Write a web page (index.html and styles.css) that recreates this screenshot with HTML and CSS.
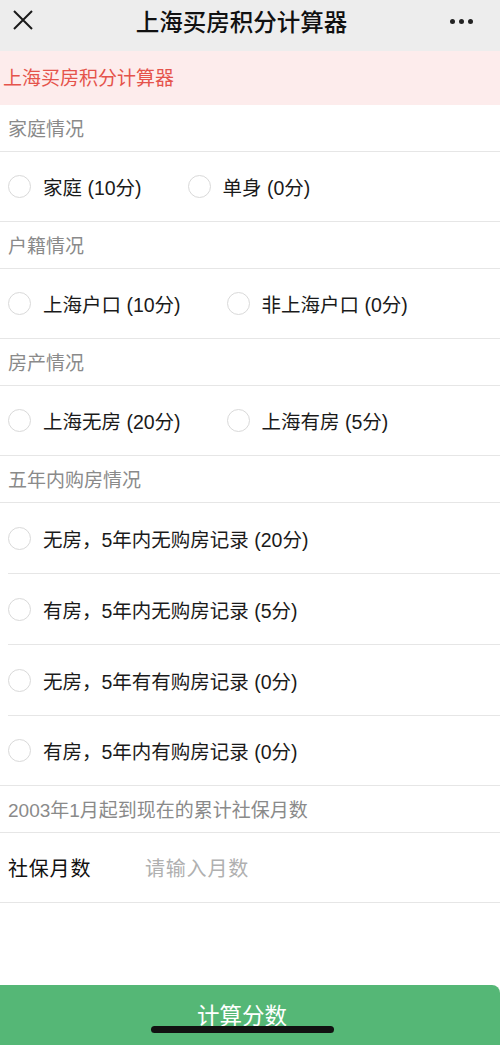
FILE: index.html
```html
<!DOCTYPE html>
<html lang="zh-CN">
<head>
    <meta charset="UTF-8">
    <meta name="viewport" content="width=device-width, initial-scale=1.0">
    <title>上海买房积分计算器</title>
    <link rel="stylesheet" href="styles.css">
</head>
<body>
    <div class="page">
        <header class="nav">
            <span class="nav-close">
                <svg width="20" height="20" viewBox="0 0 20 20">
                    <path d="M1 1 L19 19 M19 1 L1 19" stroke="#1a1a1a" stroke-width="2" fill="none"/>
                </svg>
            </span>
            <h1>上海买房积分计算器</h1>
            <span class="nav-more"><i></i><i></i><i></i></span>
        </header>

        <div class="banner">上海买房积分计算器</div>

        <div class="group-title">家庭情况</div>
        <div class="row">
            <label class="radio"><span class="circle"></span>家庭 (10分)</label>
            <label class="radio"><span class="circle"></span>单身 (0分)</label>
        </div>

        <div class="group-title">户籍情况</div>
        <div class="row">
            <label class="radio"><span class="circle"></span>上海户口 (10分)</label>
            <label class="radio"><span class="circle"></span>非上海户口 (0分)</label>
        </div>

        <div class="group-title">房产情况</div>
        <div class="row">
            <label class="radio"><span class="circle"></span>上海无房 (20分)</label>
            <label class="radio"><span class="circle"></span>上海有房 (5分)</label>
        </div>

        <div class="group-title">五年内购房情况</div>
        <div class="row inset">
            <label class="radio"><span class="circle"></span>无房，5年内无购房记录 (20分)</label>
        </div>
        <div class="row inset">
            <label class="radio"><span class="circle"></span>有房，5年内无购房记录 (5分)</label>
        </div>
        <div class="row inset">
            <label class="radio"><span class="circle"></span>无房，5年有有购房记录 (0分)</label>
        </div>
        <div class="row">
            <label class="radio"><span class="circle"></span>有房，5年内有购房记录 (0分)</label>
        </div>

        <div class="group-title">2003年1月起到现在的累计社保月数</div>
        <div class="row field">
            <span class="field-label">社保月数</span>
            <span class="field-input">请输入月数</span>
        </div>

        <button class="submit">计算分数</button>
        <div class="home-bar"></div>
    </div>
</body>
</html>
```

FILE: styles.css
```css
body {
    margin: 0;
    padding: 0;
    font-family: "Liberation Sans", "Noto Sans CJK SC", sans-serif;
    color: #1a1a1a;
    background-color: #fff;
}
.page {
    position: relative;
    display: flex;
    flex-direction: column;
    min-height: 1045px;
}
.nav {
    height: 51px;
    background-color: #ededed;
    display: flex;
    align-items: center;
    justify-content: space-between;
    padding: 0 27px 0 13px;
    box-sizing: border-box;
}
.nav h1 {
    margin: -9px 0 0 0;
    font-size: 23.5px;
    font-weight: 500;
    color: #111;
}
.nav-close {
    display: flex;
    margin-top: -12px;
}
.nav-more {
    display: flex;
    gap: 4px;
    margin-top: -9px;
}
.nav-more i {
    width: 5px;
    height: 5px;
    border-radius: 50%;
    background-color: #222;
}
.banner {
    height: 54px;
    background-color: #fdecec;
    color: #e5534b;
    font-size: 19px;
    line-height: 56px;
    padding-left: 3px;
}
.group-title {
    height: 46.5px;
    padding: 4px 0 0 8px;
    line-height: 41px;
    box-sizing: border-box;
    color: #8a8a8a;
    font-size: 19px;
    border-bottom: 1px solid #e6e6e6;
}
.row {
    height: 70.5px;
    box-sizing: border-box;
    display: flex;
    align-items: center;
    gap: 46px;
    padding-left: 8px;
    border-bottom: 1px solid #e6e6e6;
    font-size: 19.5px;
}
.row.inset {
    height: 71px;
    border-bottom: none;
    background-image: linear-gradient(#e6e6e6, #e6e6e6);
    background-size: calc(100% - 8px) 1px;
    background-position: 8px 100%;
    background-repeat: no-repeat;
}
.radio {
    display: flex;
    align-items: center;
    gap: 12px;
    color: #1a1a1a;
}
.circle {
    width: 23px;
    height: 23px;
    border: 1px solid #d9d9d9;
    border-radius: 50%;
    box-sizing: border-box;
    flex: none;
}
.field {
    gap: 0;
}
.field-label {
    width: 137px;
    font-size: 20px;
    letter-spacing: 0.8px;
    color: #111;
}
.field-input {
    font-size: 20px;
    letter-spacing: 0.8px;
    color: #b0b0b0;
}
.submit {
    margin-top: auto;
    height: 60px;
    border: none;
    border-radius: 0 8px 0 0;
    background-color: #55b776;
    color: #fff;
    font-family: inherit;
    font-size: 22.5px;
    padding: 0 16px 2px 0;
}
.home-bar {
    position: absolute;
    left: 151px;
    bottom: 12px;
    width: 183px;
    height: 7px;
    border-radius: 4px;
    background-color: #111;
}
```
